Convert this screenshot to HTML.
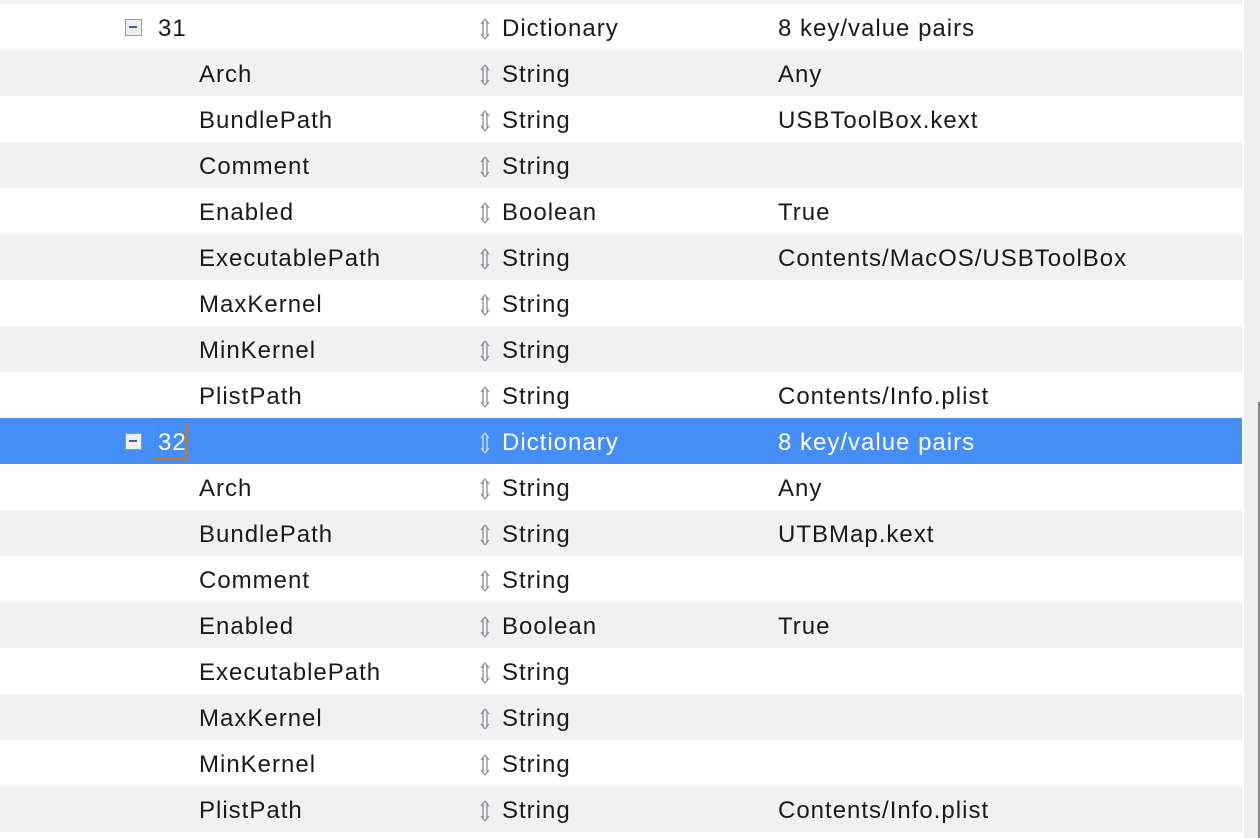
<!DOCTYPE html>
<html><head><meta charset="utf-8"><style>
body{margin:0;width:1260px;height:838px;background:#fff;overflow:hidden;position:relative;font-family:"Liberation Sans","Noto Sans CJK SC",sans-serif;font-size:24px;letter-spacing:1px;color:#1a1a1a}
.top{position:absolute;left:0;top:0;width:1242px;height:4px;background:#f0f1f0}
.row{position:absolute;left:0;width:1242px;height:46px;line-height:46px}
.g{background:#f0f1f0}
.sel{background:#448ef5;color:#fff}
.row span{position:absolute;top:2px;white-space:nowrap}
.k{left:199px}.n{left:158px}.t{left:502px}.v{left:778px}
.box{position:absolute;left:125px;top:15px;width:17px;height:17px;border:1.5px solid #9a9a9a;background:#eee;box-sizing:border-box}
.box:after{content:"";position:absolute;left:3px;top:6px;width:8px;height:2px;background:#3a5fa0}
.foc{position:absolute;left:153px;top:5px;width:34px;height:36px;border:1.5px dotted #e07a20;box-sizing:border-box}
.track{position:absolute;left:1244px;top:0;width:16px;height:838px;background:#efefef}
.thumb{position:absolute;left:1258px;top:402px;width:2px;height:436px;background:#888}
</style></head><body>
<div class="top"></div>
<div class="track"></div><div class="thumb"></div>
<div id="c"></div>
<script>
var rows=[["31","Dictionary","8 key/value pairs",1],["Arch","String","Any"],["BundlePath","String","USBToolBox.kext"],["Comment","String",""],["Enabled","Boolean","True"],["ExecutablePath","String","Contents/MacOS/USBToolBox"],["MaxKernel","String",""],["MinKernel","String",""],["PlistPath","String","Contents/Info.plist"],["32","Dictionary","8 key/value pairs",2],["Arch","String","Any"],["BundlePath","String","UTBMap.kext"],["Comment","String",""],["Enabled","Boolean","True"],["ExecutablePath","String",""],["MaxKernel","String",""],["MinKernel","String",""],["PlistPath","String","Contents/Info.plist"]];
var h="";
rows.forEach(function(r,i){
var cls="row"+(r[3]==2?" sel":(i%2?" g":""));
var ac=r[3]==2?"#cfe0fb":"#8a8a9a";
h+='<div class="'+cls+'" style="top:'+(4+46*i)+'px">';
if(r[3]){h+='<div class="box"></div>'+(r[3]==2?'<div class="foc"></div>':'')+'<span class="n">'+r[0]+'</span>';}
else h+='<span class="k">'+r[0]+'</span>';
h+='<svg style="position:absolute;left:476px;top:13px" width="18" height="24" viewBox="0 0 18 24"><path d="M9 2 L5 7 M9 2 L13 7 M9 22 L5 17 M9 22 L13 17 M7 4 V20 M11 4 V20" stroke="'+ac+'" stroke-width="1.3" fill="none"/></svg>';
h+='<span class="t">'+r[1]+'</span><span class="v">'+r[2]+'</span></div>';
});
document.getElementById("c").innerHTML=h;
</script>
</body></html>
